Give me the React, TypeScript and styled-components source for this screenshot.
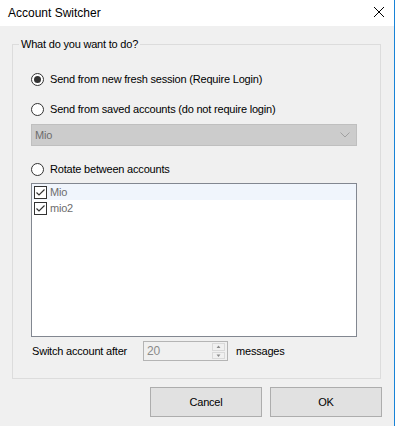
import React from 'react';
import styled, { createGlobalStyle } from 'styled-components';

const GlobalStyle = createGlobalStyle`
    html, body {
        margin: 0;
        padding: 0;
        background: #f0f0f0;
    }
    body {
        font-family: 'Liberation Sans', Arial, sans-serif;
        font-size: 11px;
        letter-spacing: -0.2px;
        color: #000;
    }
`;

const Window = styled.div`
    width: 394px;
    height: 426px;
    border-right: 1px solid #1883d7;
    background: #f0f0f0;
    display: flex;
    flex-direction: column;
`;

const TitleBar = styled.div`
    height: 26px;
    background: #fff;
    display: flex;
    align-items: center;
    justify-content: space-between;
    padding: 0 10px 0 8px;
    font-size: 12px;
    letter-spacing: 0;
`;

const CloseButton = styled.svg`
    width: 10px;
    height: 10px;
    margin-top: -3px;
`;

const GroupBox = styled.fieldset`
    width: 369px;
    margin: 10px 0 0 12px;
    padding: 0 18px 17px 18px;
    border: 1px solid #dcdcdc;
    box-sizing: border-box;
    display: flex;
    flex-direction: column;
    min-width: 0;
`;

const Legend = styled.legend`
    margin-left: -12px;
    padding: 0 2px;
    line-height: 16px;
`;

const RadioRow = styled.label<{ $gap: number }>`
    display: flex;
    align-items: center;
    gap: 6px;
    height: 16px;
    margin-top: ${(p) => p.$gap}px;
`;

const RadioCircle = styled.span<{ $checked?: boolean }>`
    width: 13px;
    height: 13px;
    box-sizing: border-box;
    border: 1px solid #333;
    border-radius: 50%;
    background: #fff;
    display: flex;
    align-items: center;
    justify-content: center;

    &::after {
        content: '';
        width: 7px;
        height: 7px;
        border-radius: 50%;
        background: ${(p) => (p.$checked ? '#333' : 'transparent')};
    }
`;

const Combo = styled.div`
    margin-top: 7px;
    width: 326px;
    height: 22px;
    box-sizing: border-box;
    background: #cccccc;
    border: 1px solid #bfbfbf;
    display: flex;
    align-items: center;
    justify-content: space-between;
    padding: 0 6px 0 3px;
    color: #6d6d6d;
`;

const ListBox = styled.div`
    margin-top: 6px;
    width: 326px;
    height: 154px;
    box-sizing: border-box;
    border: 1px solid #828790;
    background: #fff;
    display: flex;
    flex-direction: column;
`;

const ListItem = styled.div<{ $active?: boolean }>`
    height: 16px;
    display: flex;
    align-items: center;
    gap: 3px;
    padding-left: 2px;
    background: ${(p) => (p.$active ? '#f0f5fc' : 'transparent')};
    color: #6d6d6d;
`;

const CheckBox = styled.svg`
    width: 13px;
    height: 13px;
    flex: none;
`;

const SpinRow = styled.div`
    margin-top: 4px;
    height: 20px;
    display: flex;
    align-items: center;
`;

const SpinLabel = styled.span`
    width: 111px;
    padding-left: 1px;
`;

const SpinBox = styled.div`
    width: 85px;
    height: 20px;
    box-sizing: border-box;
    border: 1px solid #b4b4b4;
    display: flex;
    align-items: center;
    justify-content: space-between;
    padding: 0 2px 0 3px;
    color: #8a8a8a;
    font-size: 12px;
`;

const SpinButtons = styled.div`
    width: 13px;
    height: 16px;
    display: flex;
    flex-direction: column;
    gap: 1px;
`;

const SpinArrow = styled.svg`
    width: 13px;
    height: 7.5px;
    background: #f0f0f0;
    border: 1px solid #d9d9d9;
    box-sizing: border-box;
`;

const After = styled.span`
    margin-left: 8px;
`;

const ButtonRow = styled.div`
    margin: 8px 0 0 150px;
    display: flex;
    gap: 8px;
`;

const Button = styled.button`
    width: 112px;
    height: 30px;
    background: #e1e1e1;
    border: 1px solid #adadad;
    font-family: 'Liberation Sans', Arial, sans-serif;
    font-size: 11px;
    letter-spacing: -0.2px;
    color: #000;
    padding: 0;
`;

const Radio: React.FC<{ checked?: boolean; gap: number; label: string }> = ({
    checked,
    gap,
    label
}) => (
    <RadioRow $gap={gap}>
        <RadioCircle $checked={checked} />
        {label}
    </RadioRow>
);

const Check: React.FC = () => (
    <CheckBox viewBox="0 0 13 13">
        <rect x="0.5" y="0.5" width="12" height="12" fill="#fff" stroke="#333" />
        <path d="M2.5 6.5 L5 9 L10.5 3.5" fill="none" stroke="#333" strokeWidth="1.2" />
    </CheckBox>
);

const accounts = ['Mio', 'mio2'];

export default function App() {
    return (
        <Window>
            <GlobalStyle />
            <TitleBar>
                Account Switcher
                <CloseButton viewBox="0 0 10 10">
                    <path d="M0 0 L10 10 M10 0 L0 10" stroke="#000" strokeWidth="1" />
                </CloseButton>
            </TitleBar>
            <GroupBox>
                <Legend>What do you want to do?</Legend>
                <Radio checked gap={19} label="Send from new fresh session (Require Login)" />
                <Radio gap={14} label="Send from saved accounts (do not require login)" />
                <Combo>
                    Mio
                    <svg width="10" height="6" viewBox="0 0 10 6">
                        <path d="M0.5 0.5 L5 5 L9.5 0.5" fill="none" stroke="#a0a0a0" />
                    </svg>
                </Combo>
                <Radio gap={15} label="Rotate between accounts" />
                <ListBox>
                    {accounts.map((name, i) => (
                        <ListItem key={name} $active={i === 0}>
                            <Check />
                            {name}
                        </ListItem>
                    ))}
                </ListBox>
                <SpinRow>
                    <SpinLabel>Switch account after</SpinLabel>
                    <SpinBox>
                        20
                        <SpinButtons>
                            <SpinArrow viewBox="0 0 13 7">
                                <path d="M4 5 L6.5 2 L9 5 Z" fill="#8a8a8a" />
                            </SpinArrow>
                            <SpinArrow viewBox="0 0 13 7">
                                <path d="M4 2 L6.5 5 L9 2 Z" fill="#8a8a8a" />
                            </SpinArrow>
                        </SpinButtons>
                    </SpinBox>
                    <After>messages</After>
                </SpinRow>
            </GroupBox>
            <ButtonRow>
                <Button>Cancel</Button>
                <Button>OK</Button>
            </ButtonRow>
        </Window>
    );
}
